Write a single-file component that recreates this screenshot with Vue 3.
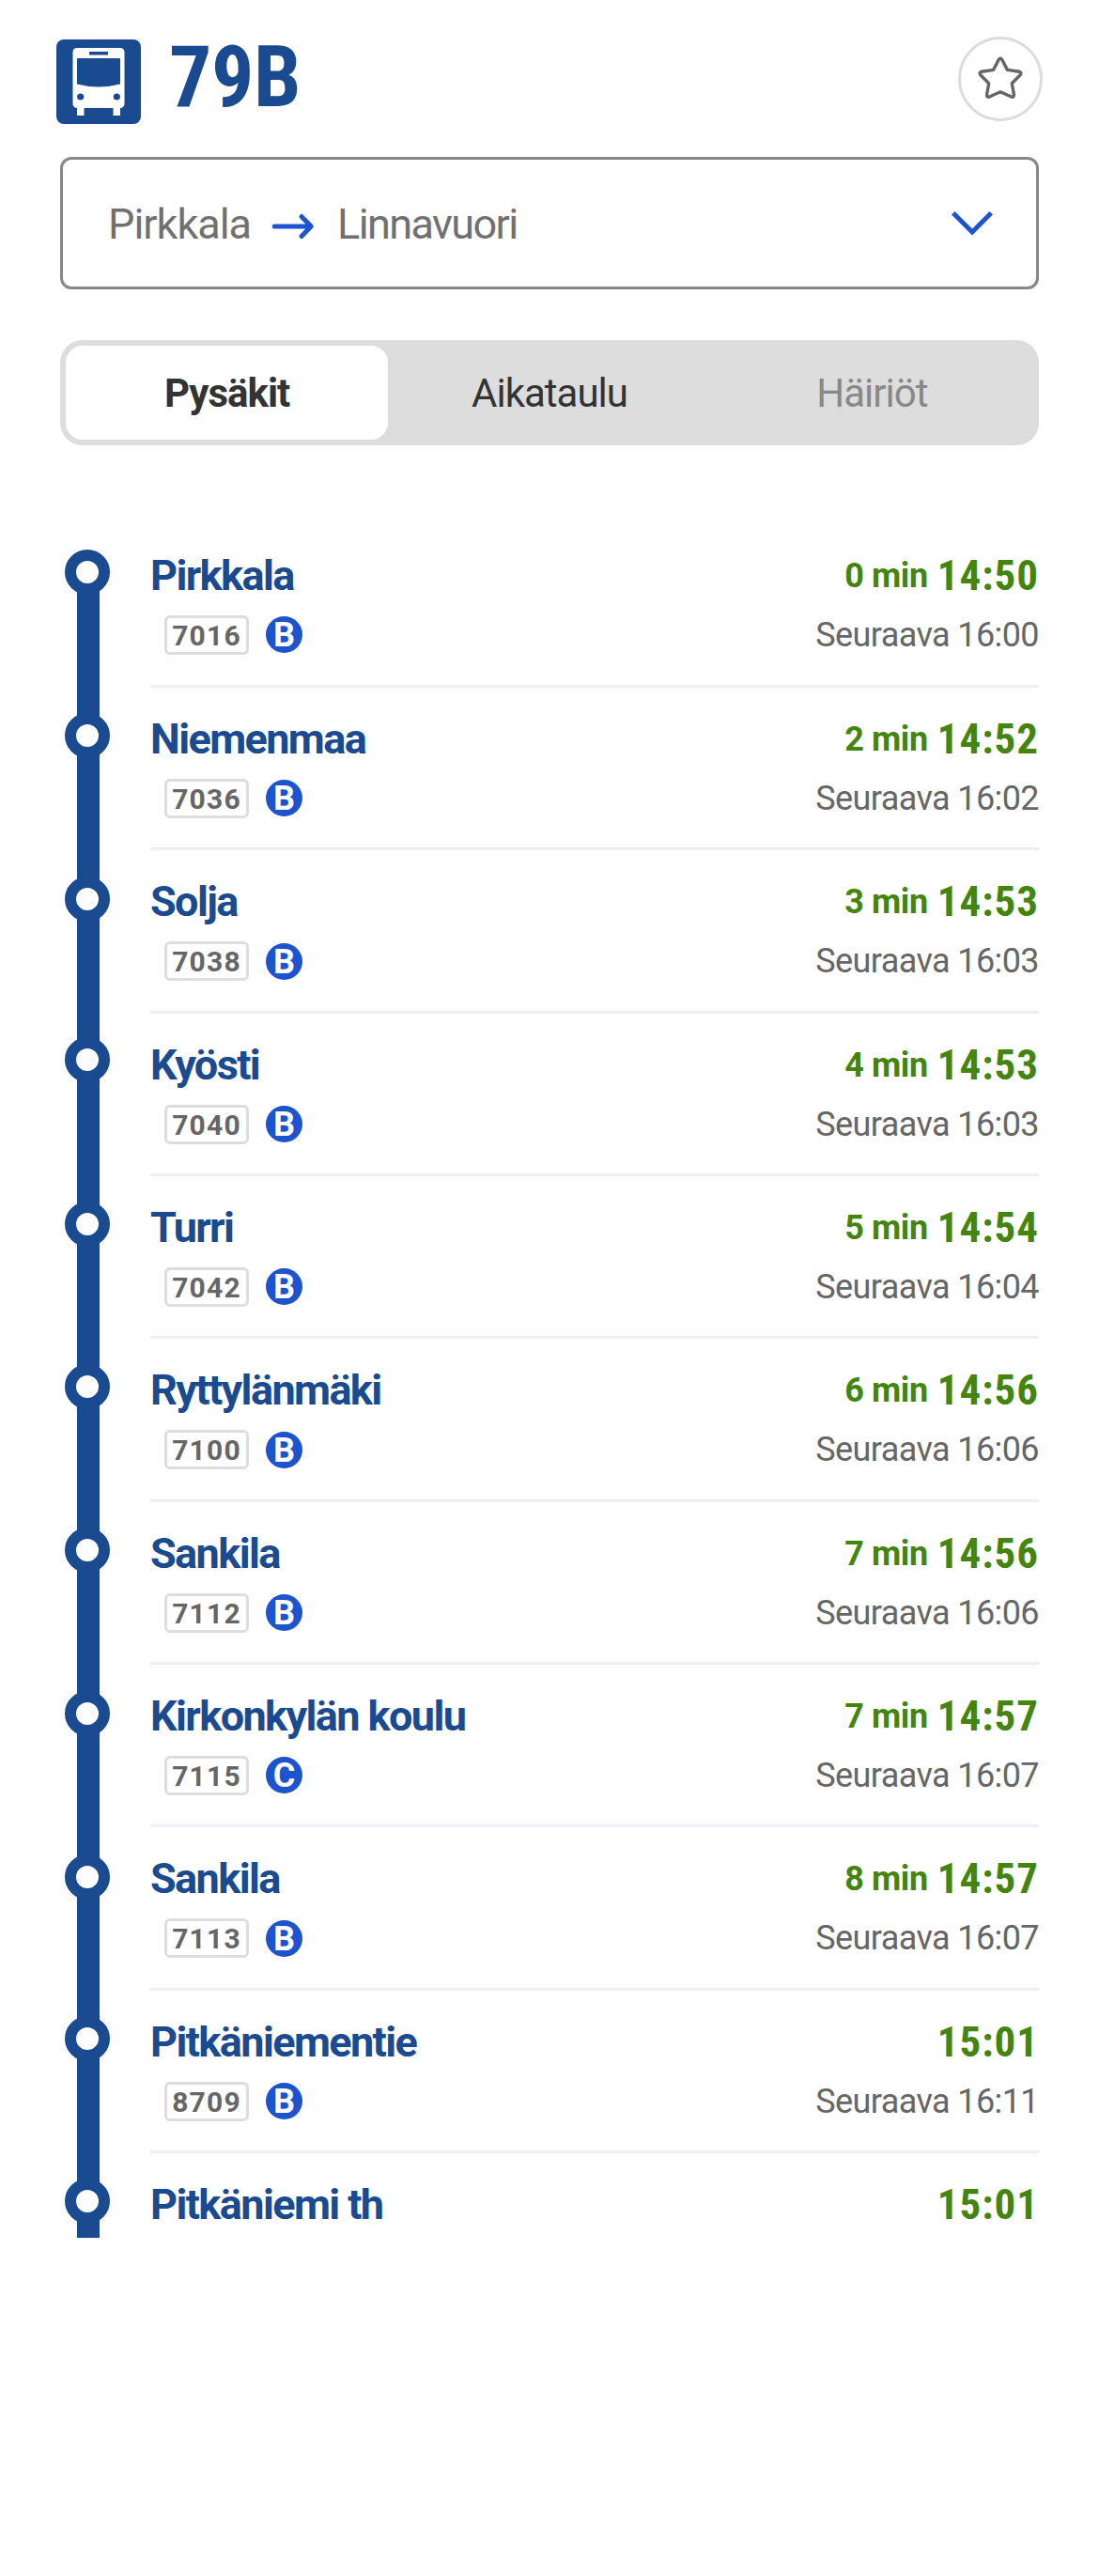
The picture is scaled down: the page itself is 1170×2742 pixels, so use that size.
<script setup>
const stops = [
  { name: 'Pirkkala', code: '7016', zone: 'B', min: '0 min', time: '14:50', next: '16:00' },
  { name: 'Niemenmaa', code: '7036', zone: 'B', min: '2 min', time: '14:52', next: '16:02' },
  { name: 'Solja', code: '7038', zone: 'B', min: '3 min', time: '14:53', next: '16:03' },
  { name: 'Kyösti', code: '7040', zone: 'B', min: '4 min', time: '14:53', next: '16:03' },
  { name: 'Turri', code: '7042', zone: 'B', min: '5 min', time: '14:54', next: '16:04' },
  { name: 'Ryttylänmäki', code: '7100', zone: 'B', min: '6 min', time: '14:56', next: '16:06' },
  { name: 'Sankila', code: '7112', zone: 'B', min: '7 min', time: '14:56', next: '16:06' },
  { name: 'Kirkonkylän koulu', code: '7115', zone: 'C', min: '7 min', time: '14:57', next: '16:07' },
  { name: 'Sankila', code: '7113', zone: 'B', min: '8 min', time: '14:57', next: '16:07' },
  { name: 'Pitkäniementie', code: '8709', zone: 'B', min: '', time: '15:01', next: '16:11' },
  { name: 'Pitkäniemi th', code: '', zone: '', min: '', time: '15:01', next: '' },
]
</script>

<template>
  <main class="page">
    <header class="header">
      <svg class="bus" viewBox="0 0 90 90" aria-hidden="true">
        <rect width="90" height="90" rx="8" fill="#1a4a8f" />
        <path fill="#fff" d="M22 73h7.500v8H22zM60.500 73h7.500v8h-7.500z" />
        <rect x="17.500" y="9" width="55" height="64" rx="4.500" fill="#fff" />
        <rect x="35" y="13" width="20" height="3.500" fill="#1a4a8f" />
        <path d="M22 21q0-1 1-1h44q1 0 1 1v26.500q-23 6-46 0z" fill="#1a4a8f" />
        <circle cx="25.700" cy="61" r="3.600" fill="#1a4a8f" />
        <circle cx="64.300" cy="61" r="3.600" fill="#1a4a8f" />
      </svg>
      <h1 class="line-name">79B</h1>
      <button class="favourite" aria-label="Suosikki">
        <svg viewBox="0 0 90 90" fill="none" stroke="#666" stroke-width="3.400" stroke-linejoin="round">
          <path d="M43.200 24.500q1.800-2.800 3.600 0L52.400 35.400 64.900 37.200q3.200.8 1.300 3.500L57.300 49.700 59.400 61.700q.2 3.200-2.800 2.300L45 58.800 33.400 64q-3 .9-2.800-2.300L32.700 49.700 23.800 40.700q-1.900-2.700 1.300-3.500L37.600 35.400z" />
        </svg>
      </button>
    </header>

    <button class="direction">
      <span>Pirkkala</span>
      <svg class="arrow" viewBox="0 0 46 30" fill="none" stroke="#1c54d0" stroke-width="5" stroke-linecap="round" stroke-linejoin="round">
        <path d="M3.200 15H42M32 4.500 42.200 15 32 25.500" />
      </svg>
      <span class="destination">Linnavuori</span>
      <svg class="chevron" viewBox="0 0 44 26" fill="none" stroke="#1c54d0" stroke-width="5">
        <path d="M1.800 1.800 22 22 42.200 1.800" />
      </svg>
    </button>

    <nav class="tabs">
      <button class="tab active">Pysäkit</button>
      <button class="tab">Aikataulu</button>
      <button class="tab disabled">Häiriöt</button>
    </nav>

    <ul class="stops">
      <li v-for="(stop, i) in stops" :key="i" class="stop">
        <div class="rail"><i class="ring"></i></div>
        <div class="body">
          <div class="info">
            <div class="name">{{ stop.name }}</div>
            <div v-if="stop.code" class="tags">
              <span class="code">{{ stop.code }}</span>
              <span class="zone">{{ stop.zone }}</span>
            </div>
          </div>
          <div class="departures">
            <div class="first"><span v-if="stop.min" class="min">{{ stop.min }}</span><span class="time">{{ stop.time }}</span></div>
            <div v-if="stop.next" class="next">Seuraava {{ stop.next }}</div>
          </div>
        </div>
      </li>
    </ul>
  </main>
</template>

<style>
body { background: #fff; }
</style>

<style scoped>
* { box-sizing: border-box; }
.page {
  width: 1170px;
  height: 2742px;
  background: #fff;
  font-family: Roboto, sans-serif;
  overflow: hidden;
}
button {
  font: inherit;
  border: 0;
  background: none;
  padding: 0;
}
.header {
  display: flex;
  align-items: flex-start;
  height: 167px;
  padding: 39px 60px 0;
}
.bus { width: 90px; height: 90px; margin-top: 3px; }
.line-name {
  margin: -13px 0 0 30px;
  font-family: "Roboto Condensed", Roboto, sans-serif;
  font-stretch: 75%;
  font-weight: 700;
  font-size: 90px;
  line-height: 114px;
  letter-spacing: -0.500px;
  color: #1a4a8f;
}
.favourite {
  width: 90px;
  height: 90px;
  margin-left: auto;
  border: 3px solid #ddd;
  border-radius: 50%;
}
.favourite svg { display: block; width: 90px; height: 90px; margin: -3px; }
.direction {
  display: flex;
  align-items: center;
  width: 1042px;
  height: 141px;
  margin-left: 64px;
  padding: 0 46px 0 48px;
  border: 3px solid #888;
  border-radius: 12px;
  font-size: 45px;
  letter-spacing: -1px;
  color: #707070;
}
.direction span { padding-top: 2px; }
.direction .destination { letter-spacing: -1.600px; }
.arrow { width: 46px; height: 30px; margin: 6px 24px 0 22px; }
.chevron { width: 44px; height: 26px; margin-left: auto; }
.tabs {
  display: grid;
  grid-template-columns: repeat(3, 1fr);
  width: 1042px;
  height: 112px;
  margin: 54px 0 0 64px;
  padding: 6px;
  border-radius: 24px;
  background: #ddd;
}
.tab { font-size: 42px; letter-spacing: -1px; color: #333; border-radius: 18px; }
.active { background: #fff; font-weight: 700; }
.disabled { color: #888; }
.stops {
  height: 1823.330px;
  margin: 84.670px 64px 0 69px;
  padding: 0;
  list-style: none;
  overflow: hidden;
}
.stop { display: flex; height: 173.333px; }
.rail {
  position: relative;
  width: 24px;
  margin: 0 54px 0 13px;
  background: #1a4a8f;
}
.stop:first-child .rail { margin-top: 50px; }
.ring {
  position: absolute;
  left: -13px;
  top: 27px;
  width: 48px;
  height: 48px;
  border: 12px solid #1a4a8f;
  border-radius: 50%;
  background: #fff;
}
.stop:first-child .ring { top: -24px; }
.stop:nth-child(3) .ring { top: 28px; }
.stop:nth-child(4) .ring { top: 25px; }
.stop:nth-child(8) .ring,
.stop:nth-child(9) .ring { top: 28.500px; }
.body {
  flex: 1;
  display: flex;
  justify-content: space-between;
  border-bottom: 3px solid #ecf0f4;
}
.stop + .stop .body { padding-top: 1px; }
.name {
  margin: 27px 0 0;
  font-size: 45px;
  line-height: 54px;
  font-weight: 700;
  letter-spacing: -1.600px;
  color: #1a4a8f;
}
.tags { display: flex; align-items: center; margin: 15px 0 0 15px; gap: 18px; }
.code {
  width: 90px;
  height: 42px;
  border: 3px solid #ddd;
  border-radius: 6px;
  text-align: center;
  font-size: 30px;
  line-height: 37px;
  font-weight: 700;
  letter-spacing: 1.200px;
  color: #666;
}
.zone {
  width: 39px;
  height: 39px;
  border-radius: 50%;
  background: #1c54d0;
  color: #fff;
  text-align: center;
  font-size: 36px;
  line-height: 40px;
  font-weight: 700;
}
.departures { text-align: right; color: #666; }
.first {
  display: flex;
  justify-content: flex-end;
  align-items: baseline;
  height: 54px;
  margin-top: 27px;
  line-height: 54px;
  color: #44850f;
}
.min {
  padding-bottom: 3px;
  margin-right: 10px;
  font-size: 36px;
  font-weight: 700;
  letter-spacing: -0.400px;
  position: relative;
  top: -3px;
}
.time {
  font-family: "Roboto Condensed", Roboto, sans-serif;
  font-stretch: 75%;
  font-size: 45px;
  font-weight: 700;
  letter-spacing: 1px;
}
.next { margin-top: 15px; font-size: 36px; line-height: 42px; letter-spacing: -0.600px; }
</style>
